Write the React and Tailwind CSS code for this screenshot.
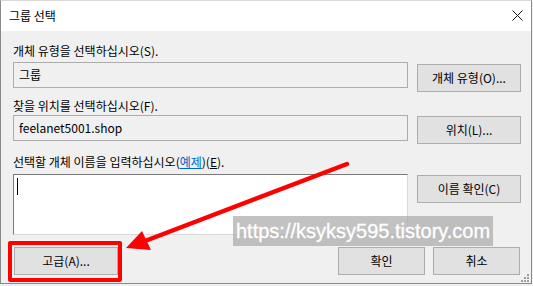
import React from "react";

const font = { fontFamily: '"Noto Sans CJK KR", "Noto Sans", sans-serif' };

function Btn({ children, className = "" }) {
  return (
    <div
      className={
        "flex items-center justify-center bg-[#e1e1e1] border border-[#adadad] text-[12px] text-black " +
        className
      }
    >
      {children}
    </div>
  );
}

function App() {
  return (
    <div
      className="relative w-[533px] h-[286px] overflow-hidden bg-[#f0f0f0] text-[12px] leading-[16px] text-black"
      style={font}
    >
      <div className="flex flex-col h-[284px] w-[532px] border border-[#8a8a8a] border-t-[#d9d9d9]">
        {/* Title bar */}
        <div className="flex items-center justify-between h-[30px] bg-white pl-[8px] pr-[8px]">
          <span className="text-[12px]">그룹 선택</span>
          <svg width="11" height="11" viewBox="0 0 11 11" className="mt-[-2px]">
            <path d="M0.5 0.5 L10.5 10.5 M10.5 0.5 L0.5 10.5" stroke="#111" strokeWidth="1" />
          </svg>
        </div>

        {/* Body */}
        <div className="flex flex-col pl-[12px] pt-[12px]">
          <div className="h-[16px]">개체 유형을 선택하십시오(S).</div>
          <div className="flex gap-[9px] mt-[3px]">
            <div className="w-[395px] h-[26px] border border-[#adadad] bg-[#f0f0f0] flex items-center pl-[5px]">그룹</div>
            <Btn className="w-[104px] h-[28px] mt-[2px]">개체 유형(O)...</Btn>
          </div>

          <div className="h-[16px] mt-[6px]">찾을 위치를 선택하십시오(F).</div>
          <div className="flex gap-[9px] mt-[1px]">
            <div className="w-[395px] h-[26px] border border-[#adadad] bg-[#f0f0f0] flex items-center pl-[5px]">feelanet5001.shop</div>
            <Btn className="w-[104px] h-[28px] mt-[1px]">위치(L)...</Btn>
          </div>

          <div className="h-[16px] mt-[10px]">
            선택할 개체 이름을 입력하십시오(<span className="text-[#0066cc] underline">예제</span>)(<span className="underline">E</span>).
          </div>
          <div className="flex gap-[9px] mt-[4px]">
            <div className="w-[395px] h-[61px] bg-white border border-[#7a7a7a] border-r-[#d9d9d9] border-b-[#d9d9d9] pl-[3px] pt-[3px]">
              <div className="w-[1px] h-[17px] bg-black" />
            </div>
            <Btn className="w-[104px] h-[28px] mt-[1px]">이름 확인(C)</Btn>
          </div>

          <div className="flex mt-[12px]">
            <Btn className="w-[104px] h-[28px] ml-[1px]">고급(A)...</Btn>
            <Btn className="w-[87px] h-[28px] ml-[220px]">확인</Btn>
            <Btn className="w-[87px] h-[28px] ml-[8px]">취소</Btn>
          </div>
        </div>
      </div>

      {/* resize grip */}
      <svg className="absolute right-[3px] bottom-[3px]" width="9" height="9" viewBox="0 0 9 9">
        <rect x="6" y="0" width="2" height="2" fill="#a0a0a0" />
        <rect x="3" y="3" width="2" height="2" fill="#a0a0a0" />
        <rect x="6" y="3" width="2" height="2" fill="#a0a0a0" />
        <rect x="0" y="6" width="2" height="2" fill="#a0a0a0" />
        <rect x="3" y="6" width="2" height="2" fill="#a0a0a0" />
        <rect x="6" y="6" width="2" height="2" fill="#a0a0a0" />
      </svg>

      {/* watermark */}
      <div
        className="absolute left-[233px] top-[216px] w-[260px] h-[30px] bg-[#a8a8a8]/70 text-white text-[20px] leading-[30px] pl-[3px] whitespace-nowrap"
        style={{ fontFamily: '"Liberation Sans", Arial, sans-serif', WebkitTextStroke: "0.3px white" }}
      >
        https://ksyksy595.tistory.com
      </div>

      {/* red highlight box */}
      <div className="absolute left-[8px] top-[241px] w-[114px] h-[41px] border-[4px] border-[#ff0000] rounded-[2px]" />

      {/* red arrow */}
      <svg className="absolute left-0 top-0" width="533" height="286" viewBox="0 0 533 286">
        <line x1="347" y1="164" x2="145" y2="241" stroke="#ff0000" strokeWidth="4.5" strokeLinecap="round" />
        <polygon points="126,248 142,231 151,250" fill="#ff0000" />
      </svg>
    </div>
  );
}

export default App;
